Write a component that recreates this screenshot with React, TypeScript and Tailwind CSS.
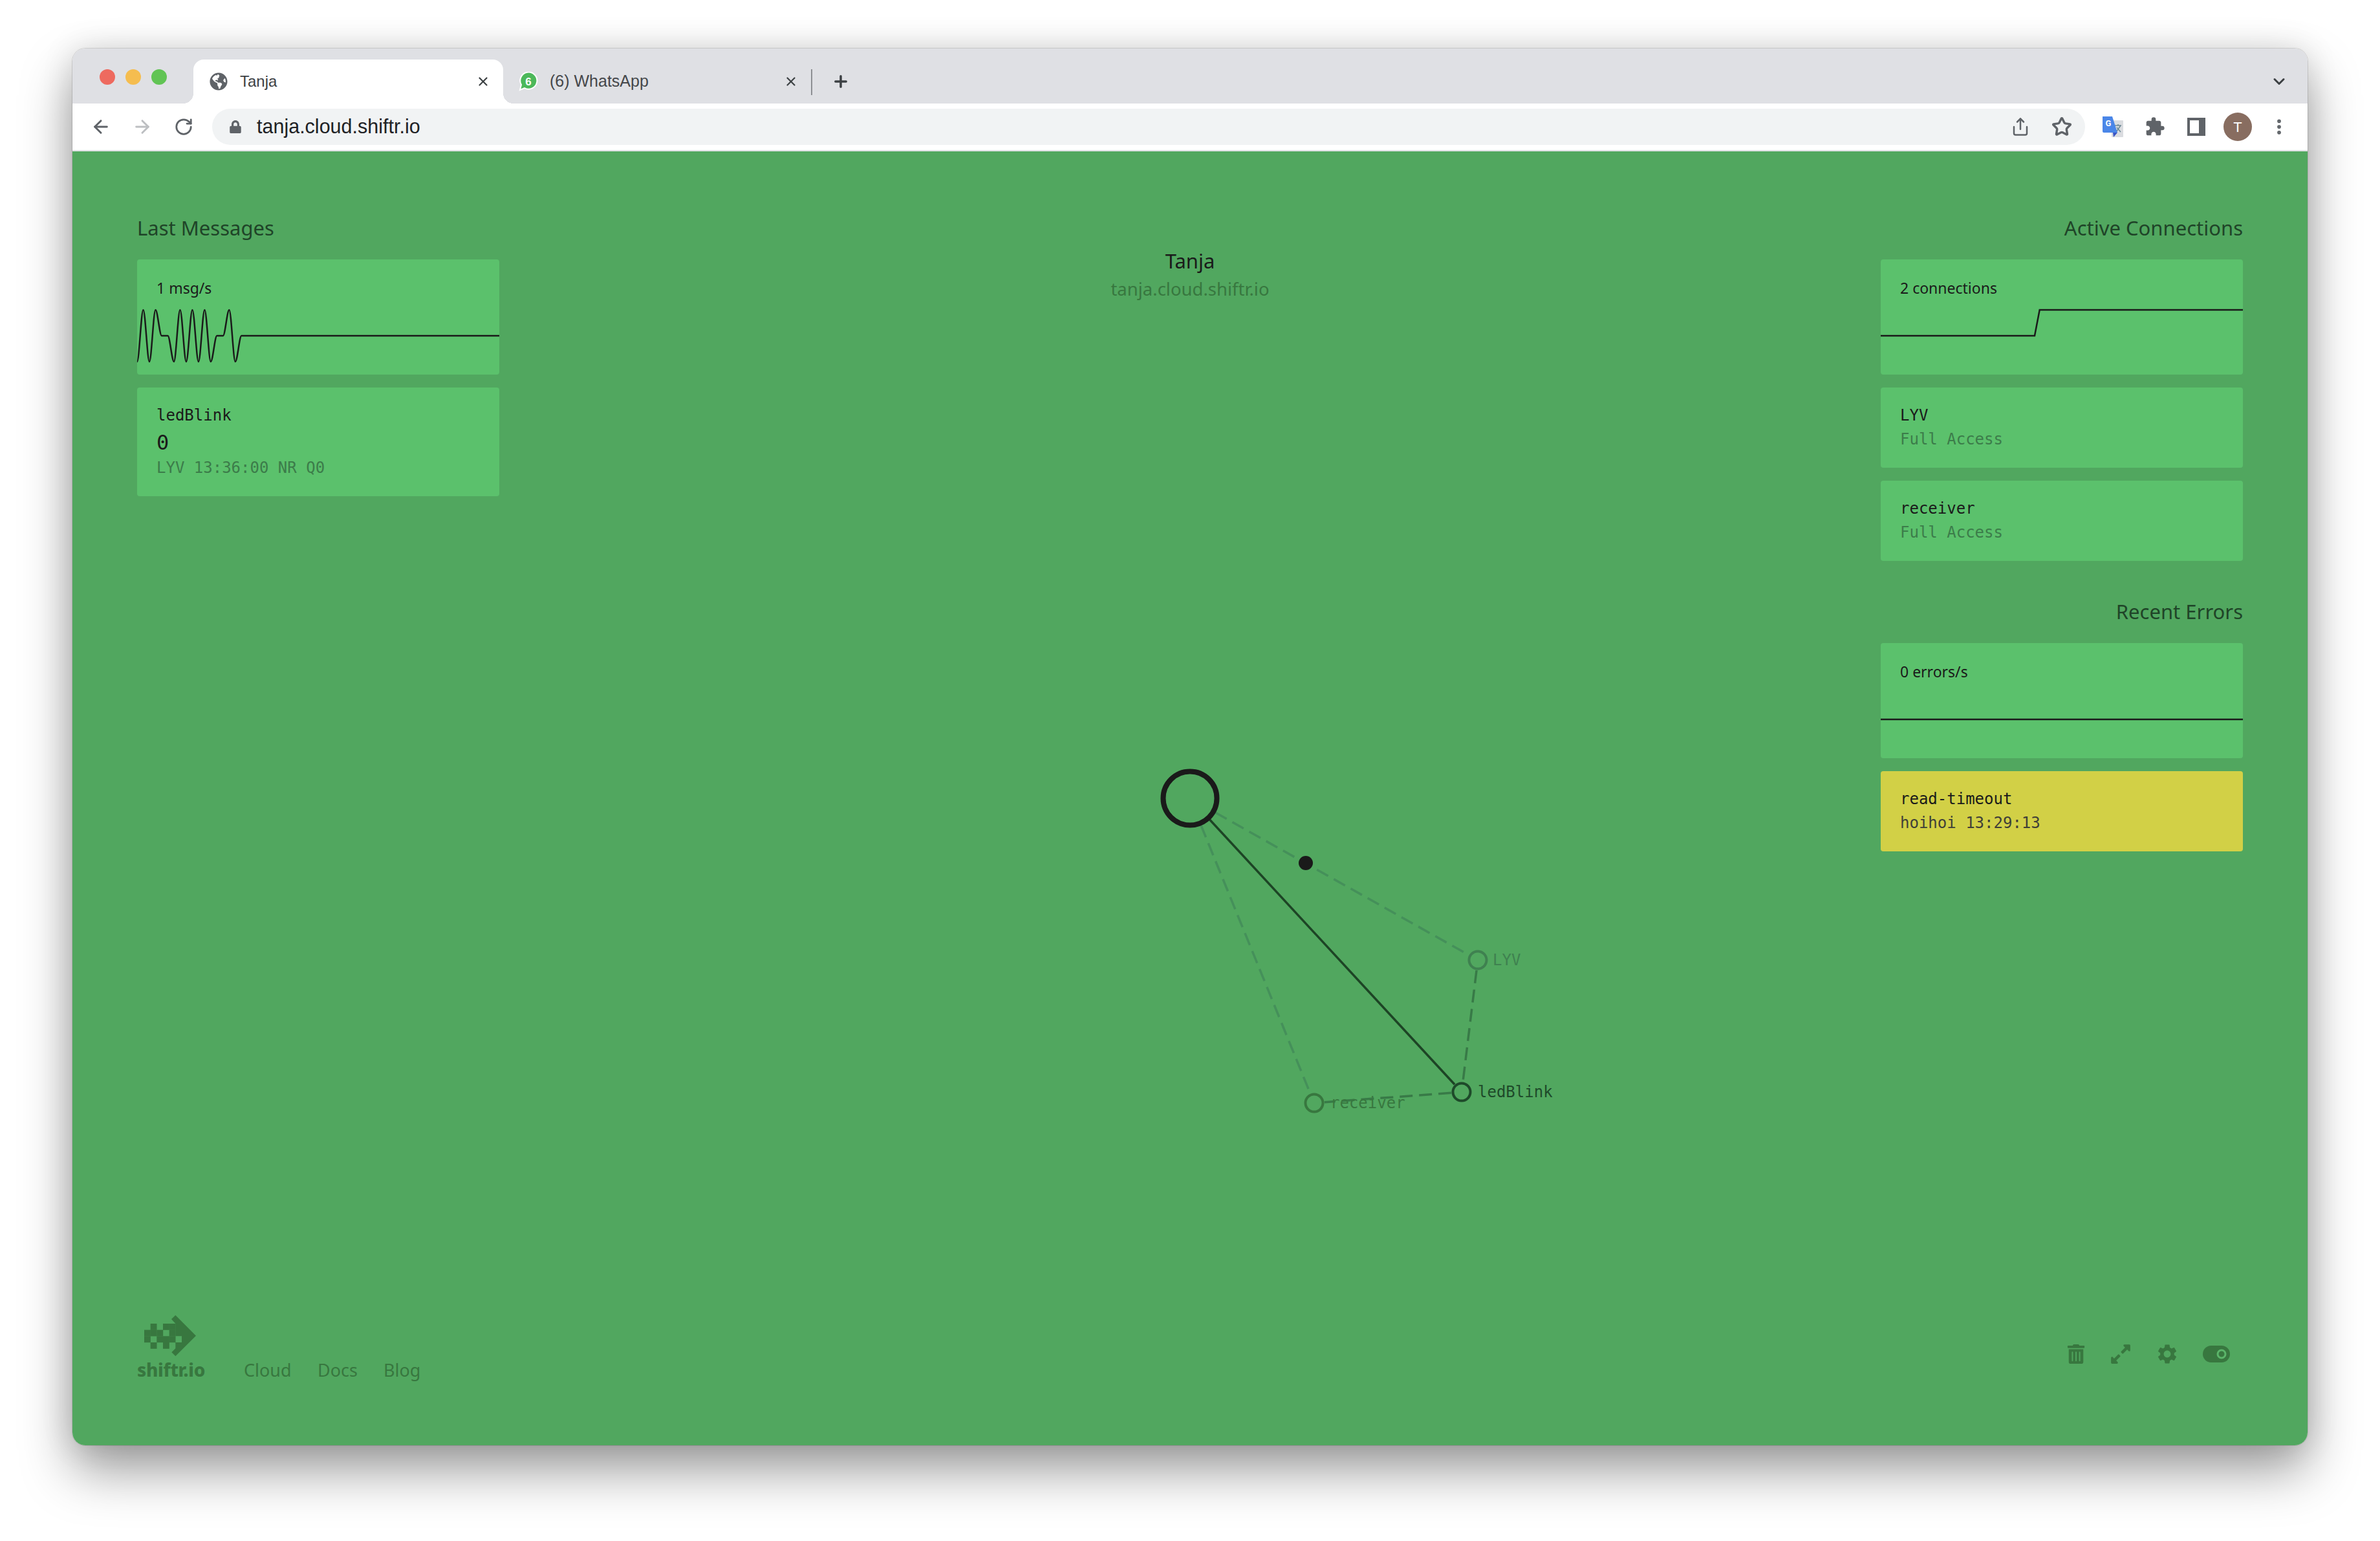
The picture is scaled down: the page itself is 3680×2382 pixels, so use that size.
import { ArrowLeft, ArrowRight, ChevronDown, EllipsisVertical, Plus, RotateCw, Share, Star, X } from "lucide-react";
import { FaExpandAlt, FaGlobeAmericas, FaLock, FaTrashAlt } from "react-icons/fa";
import { MdExtension, MdSettings } from "react-icons/md";

const SANS = "font-['Noto_Sans',sans-serif]";
const MONO = "font-['DejaVu_Sans_Mono',monospace]";
const UI = "font-['Liberation_Sans',sans-serif]";

// L = trough, P = peak, M = resting line of the sparkline
const MSG_LEVELS = { L: 158, P: 78, M: 118 };
const msgPattern = "LPLPMMLPLPLPLMMPLM".padEnd(60, "M").split("") as (keyof typeof MSG_LEVELS)[];

function sparkPath() {
  const step = 560 / 59;
  let d = `M0 ${MSG_LEVELS[msgPattern[0]]}`;
  for (let i = 1; i < msgPattern.length; i++) {
    const x0 = (i - 1) * step;
    const x1 = i * step;
    const y0 = MSG_LEVELS[msgPattern[i - 1]];
    const y1 = MSG_LEVELS[msgPattern[i]];
    d += ` C${x0 + step / 3} ${y0} ${x1 - step / 3} ${y1} ${x1} ${y1}`;
  }
  return d;
}

function Spark({ d }: { d: string }) {
  return (
    <svg className="absolute inset-0" width="560" height="178" viewBox="0 0 560 178" fill="none">
      <path d={d} stroke="#1a1a1a" strokeWidth="2.5" />
    </svg>
  );
}

function ChartCard({ label, d }: { label: string; d: string }) {
  return (
    <div className="relative h-[178px] rounded-[4px] bg-[#5bc16c] px-[30px] pt-[30px]">
      <div className={`${SANS} text-[23px] leading-[28px] text-[#1a1a1a]`}>{label}</div>
      <Spark d={d} />
    </div>
  );
}

function InfoCard({ title, sub, yellow }: { title: string; sub: string; yellow?: boolean }) {
  return (
    <div className={`rounded-[4px] px-[30px] pt-[28px] pb-[29px] ${MONO} text-[24px] leading-[30px] ${yellow ? "bg-[#d2d046]" : "bg-[#5bc16c]"}`}>
      <div className="text-[#1a1a1a]">{title}</div>
      <div className={`mt-[7px] ${yellow ? "text-[#3f3f38]" : "text-[#3c7c4a]"}`}>{sub}</div>
    </div>
  );
}

function Heading({ children, right }: { children: string; right?: boolean }) {
  return (
    <h2 className={`${SANS} h-[38px] text-[31px] leading-[36px] text-[#1f4428] ${right ? "text-right" : ""}`}>{children}</h2>
  );
}

function Slot({ children, className = "" }: { children: React.ReactNode; className?: string }) {
  return <div className={`flex h-[48px] w-[48px] shrink-0 items-center justify-center ${className}`}>{children}</div>;
}

function Tabs() {
  return (
    <div className="flex h-[85px] shrink-0 items-end bg-[#dfe0e4]">
      <div className="flex h-[85px] w-[187px] shrink-0 items-start gap-[16px] pl-[42px] pt-[32px]">
        <span className="h-[24px] w-[24px] rounded-full bg-[#ee6a5f]" />
        <span className="h-[24px] w-[24px] rounded-full bg-[#f5bd4f]" />
        <span className="h-[24px] w-[24px] rounded-full bg-[#61c454]" />
      </div>
      <div className={`${UI} relative flex h-[68px] w-[479px] shrink-0 items-center rounded-t-[16px] bg-white pl-[25px] text-[24px] text-[#3c4043]`}>
        <span className="absolute bottom-0 -left-[16px] h-[16px] w-[16px] bg-[radial-gradient(circle_at_0_0,transparent_16px,white_16px)]" />
        <span className="absolute bottom-0 -right-[16px] h-[16px] w-[16px] bg-[radial-gradient(circle_at_100%_0,transparent_16px,white_16px)]" />
        <FaGlobeAmericas size={28} color="#5f6368" />
        <span className="ml-[19px]">Tanja</span>
        <X size={22} strokeWidth={2.4} color="#3c4043" className="absolute right-[20px] top-[23px]" />
      </div>
      <div className={`${UI} relative flex h-[68px] w-[477px] shrink-0 items-center pl-[24px] text-[25px] text-[#45474a]`}>
        <svg width="30" height="30" viewBox="0 0 30 30">
          <path d="M2 28l2-8a13 13 0 1 1 5 5z" fill="#4cb85a" stroke="white" strokeWidth="2" />
          <text x="15" y="21" textAnchor="middle" fontSize="17" fontWeight="700" fill="white" fontFamily="Liberation Sans">6</text>
        </svg>
        <span className="ml-[18px]">(6) WhatsApp</span>
        <X size={22} strokeWidth={2.4} color="#3c4043" className="absolute right-[21px] top-[23px]" />
        <span className="absolute right-[-1px] top-[15px] h-[40px] w-[2px] bg-[#8d8f93]" />
      </div>
      <div className="relative flex h-[68px] flex-1 items-center pl-[31px]">
        <Plus size={28} strokeWidth={3} color="#3c4043" />
        <ChevronDown size={28} strokeWidth={2.6} color="#3c4043" className="absolute right-[30px] top-[20px]" />
      </div>
    </div>
  );
}

function Toolbar() {
  return (
    <div className="flex h-[74px] shrink-0 items-center border-b-2 border-[#dee0e4] bg-white">
      <Slot className="ml-[20px]"><ArrowLeft size={32} color="#5f6368" strokeWidth={2.2} /></Slot>
      <Slot className="ml-[16px]"><ArrowRight size={32} color="#bdbfc2" strokeWidth={2.2} /></Slot>
      <Slot className="ml-[16px]"><RotateCw size={30} color="#5f6368" strokeWidth={2.2} /></Slot>
      <div className="ml-[20px] flex h-[56px] w-[2896px] shrink-0 items-center rounded-full bg-[#f1f3f4] pl-[26px]">
        <FaLock size={20} color="#5f6368" />
        <span className={`${UI} ml-[23px] text-[30.5px] text-[#202124]`}>tanja.cloud.shiftr.io</span>
        <div className="ml-auto flex items-center gap-[16px] pr-[12px]">
          <Slot><Share size={30} color="#5f6368" strokeWidth={2} /></Slot>
          <Slot><Star size={32} color="#5f6368" strokeWidth={2.6} /></Slot>
        </div>
      </div>
      <Slot className="ml-[19px]">
        <svg width="32" height="32" viewBox="0 0 32 32">
          <rect x="14" y="6" width="18" height="26" rx="1" fill="#dadce0" />
          <path d="M19 14h10M24 12v2M21 24l7-10M22 17l6 7" stroke="#6f8a95" strokeWidth="1.6" fill="none" />
          <path d="M0 0h15l8 25H2a2 2 0 0 1-2-2z" fill="#4a86e8" />
          <path d="M16 25h7l-6 7z" fill="#3a55c4" />
          <text x="9" y="15" textAnchor="middle" fontSize="13" fontWeight="700" fill="white" fontFamily="Roboto">G</text>
        </svg>
      </Slot>
      <Slot className="ml-[17px]"><MdExtension size={32} color="#5f6368" /></Slot>
      <Slot className="ml-[16px]">
        <svg width="28" height="28" viewBox="0 0 28 28">
          <path fillRule="evenodd" d="M0 0h28v28H0zM4 4v20h14V4z" fill="#5f6368" />
        </svg>
      </Slot>
      <Slot className="ml-[16px]">
        <div className={`${UI} flex h-[44px] w-[44px] items-center justify-center rounded-full bg-[#886d60] text-[22px] text-white`}>T</div>
      </Slot>
      <Slot className="ml-[16px]"><EllipsisVertical size={30} color="#5f6368" strokeWidth={2.6} /></Slot>
    </div>
  );
}

type Pt = [number, number];

function trimmed(a: Pt, ra: number, b: Pt, rb: number) {
  const dx = b[0] - a[0];
  const dy = b[1] - a[1];
  const len = Math.hypot(dx, dy);
  return {
    x1: a[0] + (dx / len) * ra,
    y1: a[1] + (dy / len) * ra,
    x2: b[0] - (dx / len) * rb,
    y2: b[1] - (dy / len) * rb,
  };
}

function Graph() {
  const hub: Pt = [1840, 1234];
  const lyv: Pt = [2285, 1484];
  const led: Pt = [2260, 1688];
  const rec: Pt = [2032, 1705];
  const font = "DejaVu Sans Mono, monospace";
  return (
    <svg className="absolute inset-0" width="3456" height="2000" viewBox="112 234 3456 2000" fill="none">
      <line {...trimmed(hub, 45, lyv, 16)} stroke="#45905a" strokeWidth="3.5" strokeDasharray="20 10" />
      <line {...trimmed(hub, 45, rec, 16)} stroke="#45905a" strokeWidth="3.5" strokeDasharray="20 10" />
      <line {...trimmed(lyv, 16, led, 16)} stroke="#387a47" strokeWidth="3.5" strokeDasharray="20 10" />
      <line {...trimmed(led, 16, rec, 16)} stroke="#387a47" strokeWidth="3.5" strokeDasharray="20 10" />
      <line {...trimmed(hub, 45, led, 16)} stroke="#1d4425" strokeWidth="3.5" />
      <circle cx={hub[0]} cy={hub[1]} r="41.5" stroke="#1a1a1a" strokeWidth="8" />
      <circle cx="2019" cy="1334" r="11" fill="#1a1a1a" />
      <circle cx={lyv[0]} cy={lyv[1]} r="13.5" stroke="#3f8150" strokeWidth="4" />
      <circle cx={led[0]} cy={led[1]} r="13.5" stroke="#1e4a2a" strokeWidth="4" />
      <circle cx={rec[0]} cy={rec[1]} r="13.5" stroke="#38773f" strokeWidth="4" />
      <text x="2308" y="1492" fontFamily={font} fontSize="24" fill="#3f8150">LYV</text>
      <text x="2285" y="1696" fontFamily={font} fontSize="24" fill="#1e4a2a">ledBlink</text>
      <text x="2057" y="1713" fontFamily={font} fontSize="24" fill="#38773f">receiver</text>
    </svg>
  );
}

function Logo() {
  const blocks = [
    [29, 39], [87, 39], [116, 39],
    [0, 68], [29, 68], [58, 68], [116, 68],
    [0, 97], [58, 97], [87, 97], [116, 97],
    [29, 126], [87, 126],
  ];
  return (
    <div className="mb-[4px] flex w-[104px] flex-col">
      <svg className="ml-[11px]" width="80" height="64" viewBox="0 0 240 192">
        {blocks.map(([x, y]) => (
          <rect key={`${x}-${y}`} x={x} y={y} width="29.5" height="29.5" fill="#38773f" />
        ))}
        <path fillRule="evenodd" d="M126 18L145 0l95 95-95 95-18-18 18-18V39zM145 97h29v29h-29z" fill="#38773f" />
      </svg>
      <div className={`${SANS} mt-[4px] whitespace-nowrap text-center text-[28px] font-extrabold leading-[32px] tracking-[-0.3px] text-[#38773f]`}>shiftr.io</div>
    </div>
  );
}

export default function App() {
  return (
    <div className="h-[2382px] w-[3680px] overflow-hidden bg-white pl-[112px] pt-[75px]">
      <div className="flex h-[2159px] w-[3456px] flex-col overflow-hidden rounded-[20px] shadow-[0_0_0_1px_rgba(0,0,0,0.12),0_40px_80px_rgba(0,0,0,0.38),0_0_50px_rgba(0,0,0,0.12)]">
        <Tabs />
        <Toolbar />
        <main className="relative flex flex-1 flex-col bg-[#51a75f] px-[100px] pt-[100px]">
          <Graph />
          <div className="relative flex flex-1 items-start justify-between">
            <section className="flex w-[560px] flex-col">
              <Heading>Last Messages</Heading>
              <div className="mt-[29px] flex flex-col gap-[20px]">
                <ChartCard label="1 msg/s" d={sparkPath()} />
                <div className={`rounded-[4px] bg-[#5bc16c] px-[30px] pt-[28px] pb-[29px] ${MONO} text-[24px] leading-[30px]`}>
                  <div className="text-[#1a1a1a]">ledBlink</div>
                  <div className="mt-[10px] text-[32px] leading-[34px] text-[#1a1a1a]">0</div>
                  <div className="mt-[7px] text-[#3c7c4a]">LYV 13:36:00 NR Q0</div>
                </div>
              </div>
            </section>
            <section className="flex flex-1 flex-col items-center pt-[50px]">
              <div className={`${SANS} text-[31px] leading-[38px] text-[#1a1a1a]`}>Tanja</div>
              <div className={`${SANS} mt-[6px] text-[27.5px] leading-[38px] text-[#38773f]`}>tanja.cloud.shiftr.io</div>
            </section>
            <section className="flex w-[560px] flex-col">
              <Heading right>Active Connections</Heading>
              <div className="mt-[29px] flex flex-col gap-[20px]">
                <ChartCard label="2 connections" d="M0 118H238L245.7 78H560" />
                <InfoCard title="LYV" sub="Full Access" />
                <InfoCard title="receiver" sub="Full Access" />
              </div>
              <div className="mt-[60px]">
                <Heading right>Recent Errors</Heading>
              </div>
              <div className="mt-[29px] flex flex-col gap-[20px]">
                <ChartCard label="0 errors/s" d="M0 118H560" />
                <InfoCard title="read-timeout" sub="hoihoi 13:29:13" yellow />
              </div>
            </section>
          </div>
          <footer className="relative flex items-end justify-between pb-[97px]">
            <div className="flex items-end">
              <Logo />
              <nav className={`${SANS} ml-[61px] flex text-[27px] leading-[38px] text-[#38773f]`}>
                <a className="w-[114px]">Cloud</a>
                <a className="w-[102px]">Docs</a>
                <a>Blog</a>
              </nav>
            </div>
            <div className="mb-[26px] flex items-center pr-[20px] text-[#38773f]">
              <FaTrashAlt size={30} />
              <FaExpandAlt size={34} className="ml-[37px]" />
              <MdSettings size={36} className="ml-[37px]" />
              <svg className="ml-[37px]" width="42" height="26" viewBox="0 0 42 26">
                <rect width="42" height="26" rx="13" fill="currentColor" />
                <circle cx="29" cy="13" r="6" fill="none" stroke="#5bb56a" strokeWidth="3" />
              </svg>
            </div>
          </footer>
        </main>
      </div>
    </div>
  );
}
